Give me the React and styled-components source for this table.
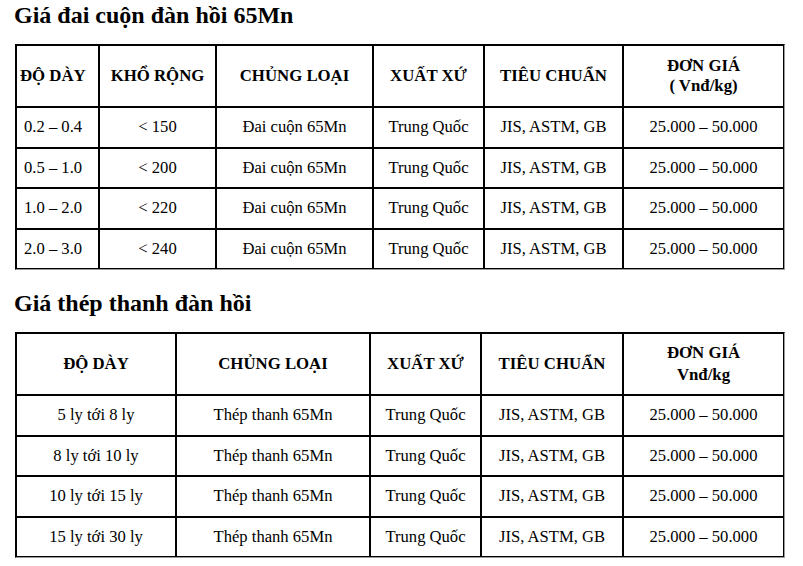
import React from "react"
import styled, { createGlobalStyle } from "styled-components"

const GlobalStyle = createGlobalStyle`
  html, body {
    margin: 0;
    padding: 0;
    background: #fff;
  }
  body {
    font-family: "Liberation Serif", "Times New Roman", serif;
    color: #000;
  }
`

const Page = styled.div`
  padding: 1px 18px 0 15px;
  width: 770px;
`

const Heading = styled.h2`
  margin: ${p => p.$top || 0}px 0 0 -1px;
  font-size: 24px;
  font-weight: bold;
  line-height: 28px;
`

const Table = styled.table`
  width: 770px;
  table-layout: fixed;
  border-collapse: separate;
  border-spacing: 0;
  border: 1px solid;
  border-color: #000 #9a9a9a #9a9a9a #000;
  margin-top: ${p => p.$top}px;
  font-size: 16.6px;
`

const HeadCell = styled.th`
  box-sizing: border-box;
  border: 1px solid #000;
  height: 62px;
  padding: 0 ${p => (p.$left ? "3px" : "2px")};
  font-size: 16.8px;
  font-weight: bold;
  text-align: ${p => (p.$left ? "left" : "center")};
  vertical-align: middle;
  line-height: ${p => p.$lh || 20}px;
  white-space: nowrap;
`

const Cell = styled.td`
  box-sizing: border-box;
  border: 1px solid #000;
  height: 40.5px;
  padding: 0 ${p => (p.$left ? "7px" : "2px")};
  text-align: ${p => (p.$left ? "left" : "center")};
  vertical-align: middle;
  line-height: 20px;
  white-space: nowrap;
`

const coilRows = [
  ["0.2 – 0.4", "< 150"],
  ["0.5 – 1.0", "< 200"],
  ["1.0 – 2.0", "< 220"],
  ["2.0 – 3.0", "< 240"],
]

const barRows = ["5 ly tới 8 ly", "8 ly tới 10 ly", "10 ly tới 15 ly", "15 ly tới 30 ly"]

const PRICE = "25.000 – 50.000"
const ORIGIN = "Trung Quốc"
const STANDARD = "JIS, ASTM, GB"

export default function App() {
  return (
    <>
      <GlobalStyle />
      <Page>
        <Heading>Giá đai cuộn đàn hồi 65Mn</Heading>
        <Table $top={15}>
          <colgroup>
            <col style={{ width: 83 }} />
            <col style={{ width: 117 }} />
            <col style={{ width: 157 }} />
            <col style={{ width: 111 }} />
            <col style={{ width: 139 }} />
            <col style={{ width: 161 }} />
          </colgroup>
          <thead>
            <tr>
              <HeadCell $left>ĐỘ DÀY</HeadCell>
              <HeadCell>KHỔ RỘNG</HeadCell>
              <HeadCell>CHỦNG LOẠI</HeadCell>
              <HeadCell>XUẤT XỨ</HeadCell>
              <HeadCell>TIÊU CHUẨN</HeadCell>
              <HeadCell>
                ĐƠN GIÁ
                <br />( Vnđ/kg)
              </HeadCell>
            </tr>
          </thead>
          <tbody>
            {coilRows.map(([thick, width]) => (
              <tr key={thick}>
                <Cell $left>{thick}</Cell>
                <Cell>{width}</Cell>
                <Cell>Đai cuộn 65Mn</Cell>
                <Cell>{ORIGIN}</Cell>
                <Cell>{STANDARD}</Cell>
                <Cell>{PRICE}</Cell>
              </tr>
            ))}
          </tbody>
        </Table>

        <Heading $top={19}>Giá thép thanh đàn hồi</Heading>
        <Table $top={15}>
          <colgroup>
            <col style={{ width: 160 }} />
            <col style={{ width: 194 }} />
            <col style={{ width: 111 }} />
            <col style={{ width: 142 }} />
            <col style={{ width: 161 }} />
          </colgroup>
          <thead>
            <tr>
              <HeadCell>ĐỘ DÀY</HeadCell>
              <HeadCell>CHỦNG LOẠI</HeadCell>
              <HeadCell>XUẤT XỨ</HeadCell>
              <HeadCell>TIÊU CHUẨN</HeadCell>
              <HeadCell $lh={22}>
                ĐƠN GIÁ
                <br />
                Vnđ/kg
              </HeadCell>
            </tr>
          </thead>
          <tbody>
            {barRows.map(size => (
              <tr key={size}>
                <Cell>{size}</Cell>
                <Cell>Thép thanh 65Mn</Cell>
                <Cell>{ORIGIN}</Cell>
                <Cell>{STANDARD}</Cell>
                <Cell>{PRICE}</Cell>
              </tr>
            ))}
          </tbody>
        </Table>
      </Page>
    </>
  )
}
